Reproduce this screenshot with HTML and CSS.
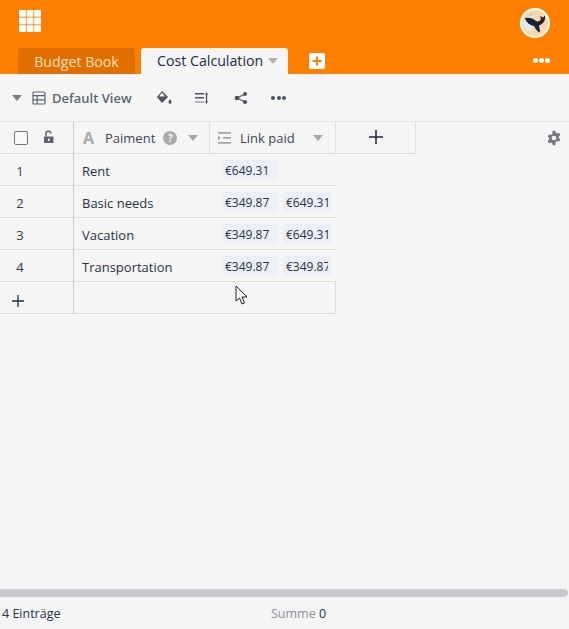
FILE: index.html
```html
<!DOCTYPE html>
<html lang="en">
<head>
  <meta charset="UTF-8" />
  <title>Cost Calculation</title>
  <link rel="stylesheet" href="styles.css">
</head>
<body>
  <div class="app">
    <header class="topbar">
      <div class="topbar-row">
        <svg class="grid-logo" width="22" height="22" viewBox="0 0 22 22">
          <rect x="0" y="0" width="6.800" height="6.800" rx="1"/><rect x="7.600" y="0" width="6.800" height="6.800"/><rect x="15.200" y="0" width="6.800" height="6.800" rx="1"/>
          <rect x="0" y="7.600" width="6.800" height="6.800"/><rect x="7.600" y="7.600" width="6.800" height="6.800"/><rect x="15.200" y="7.600" width="6.800" height="6.800"/>
          <rect x="0" y="15.200" width="6.800" height="6.800" rx="1"/><rect x="7.600" y="15.200" width="6.800" height="6.800"/><rect x="15.200" y="15.200" width="6.800" height="6.800" rx="1"/>
        </svg>
        <div class="avatar">
          <svg width="26" height="26" viewBox="0 0 26 26">
            <circle cx="13" cy="13" r="13" fill="#fbd6ad"/>
            <path d="M1 12c2-3 5-6 9-7l3 9-4 8c-4-2-7-5-8-10z" fill="#e4e8ee"/>
            <path d="M3 8c4-1 8 0 11 3 2 1 4 0 5-2l-1-3 3 1.500 2-2 0 3.500c-.5 3-3 5.500-6 6.500l1 6-1 1-3-3-2-3.500c-4-.5-8-4-9-7.500z" fill="#1a2233"/>
            <circle cx="9" cy="4.500" r="1.500" fill="#c4c8cc"/>
          </svg>
        </div>
      </div>
      <div class="tabs">
        <div class="tab tab-off">Budget Book</div>
        <div class="tab tab-on">Cost Calculation<span class="caret caret-tab"></span></div>
        <div class="tab-add">
          <svg width="16" height="16" viewBox="0 0 16 16"><rect width="16" height="16" rx="2" fill="#fff"/><path d="M8 3.500v9M3.500 8h9" stroke="#ff8000" stroke-width="2"/></svg>
        </div>
        <div class="dots dots-white"><i></i><i></i><i></i></div>
      </div>
    </header>

    <div class="toolbar">
      <span class="caret caret-view"></span>
      <svg class="view-icon" width="14" height="14" viewBox="0 0 14 14" fill="none" stroke="#5d6470" stroke-width="1.200">
        <rect x="1" y="1" width="12" height="12" rx="1"/><path d="M1 4.600h12M1 8.800h12M5.200 4.600V13"/>
      </svg>
      <span class="view-name">Default View</span>
      <svg class="tool-fill" width="16" height="16" viewBox="0 0 16 16" fill="#4c5360">
        <path d="M6 1 1 7l5 6 6-6-1.500-1.500z"/><path d="M6 2.500 3 6.500h6z" fill="#f5f5f5"/>
        <path d="M14 9c1 1.600 1.500 2.400 1.500 3.200a1.500 1.500 0 0 1-3 0c0-.8.5-1.600 1.500-3.200z"/>
      </svg>
      <svg class="tool-sort" width="14" height="14" viewBox="0 0 14 14">
        <path d="M0 2h9v1.600H0zM0 6h9v1.600H0z" fill="#4c5360"/><path d="M0 10h9v2H0z" fill="#b5b5b5"/>
        <path d="M11.500 2v10" stroke="#4c5360" stroke-width="1.300"/><path d="M10 3.500 11.500 1 13 3.500zM10 10.500l1.500 2.500 1.500-2.500z" fill="#4c5360"/>
      </svg>
      <svg class="tool-share" width="14" height="14" viewBox="0 0 14 14">
        <path d="M11 3 3 7l8 4" fill="none" stroke="#4c5360" stroke-width="1.100"/>
        <circle cx="3" cy="7" r="2.300" fill="#4c5360"/><circle cx="11" cy="3" r="2.100" fill="#4c5360"/><circle cx="11" cy="11" r="2.100" fill="#4c5360"/>
      </svg>
      <div class="dots dots-dark"><i></i><i></i><i></i></div>
    </div>

    <div class="table-area">
      <div class="row row-head">
        <div class="cell cell-index head-index">
          <span class="checkbox"></span>
          <svg class="lock" width="12" height="14" viewBox="0 0 12 14" fill="#5d6470">
            <path d="M1 6.500h9.500V13H1z"/><path d="M3 6.500V4a2.500 2.500 0 0 1 5-.5" fill="none" stroke="#5d6470" stroke-width="1.500"/>
            <rect x="5" y="8.500" width="1.500" height="2.500" fill="#f5f5f5"/>
          </svg>
        </div>
        <div class="cell cell-name head-cell">
          <span class="type-a">A</span>
          <span class="head-label">Paiment</span>
          <span class="help">?</span>
          <span class="caret caret-head"></span>
        </div>
        <div class="cell cell-link head-cell head-link">
          <svg class="link-icon" width="13" height="12" viewBox="0 0 13 12">
            <path d="M0 0h13v1.800H0zM5 5h8v1.800H5zM0 10h13v1.800H0z" fill="#a6a6a6"/><path d="M0 3.500 3 5.900 0 8.300z" fill="#a6a6a6"/>
          </svg>
          <span class="head-label">Link paid</span>
          <span class="caret caret-link"></span>
        </div>
        <div class="cell cell-add">
          <svg width="14" height="14" viewBox="0 0 14 14"><path d="M7 0v14M0 7h14" stroke="#1d2430" stroke-width="1.500"/></svg>
        </div>
        <svg class="settings" width="16" height="16" viewBox="0 0 24 24" fill="#74797f">
          <path fill-rule="evenodd" d="M10 1h4l.6 3a8 8 0 0 1 2 1.100l2.900-1 2 3.500-2.300 2a8 8 0 0 1 0 2.400l2.300 2-2 3.500-2.900-1a8 8 0 0 1-2 1.100L14 23h-4l-.6-3a8 8 0 0 1-2-1.100l-2.900 1-2-3.500 2.300-2a8 8 0 0 1 0-2.400l-2.300-2 2-3.500 2.900 1a8 8 0 0 1 2-1.100zM12 8.500a3.500 3.500 0 1 0 0 7 3.500 3.500 0 0 0 0-7z"/>
        </svg>
      </div>
      <div class="row">
        <div class="cell cell-index">1</div>
        <div class="cell cell-name">Rent</div>
        <div class="cell cell-link"><span class="chip">€649.31</span></div>
      </div>
      <div class="row">
        <div class="cell cell-index">2</div>
        <div class="cell cell-name">Basic needs</div>
        <div class="cell cell-link"><span class="chip">€349.87</span><span class="chip chip-cut">€649.31</span></div>
      </div>
      <div class="row">
        <div class="cell cell-index">3</div>
        <div class="cell cell-name">Vacation</div>
        <div class="cell cell-link"><span class="chip">€349.87</span><span class="chip chip-cut">€649.31</span></div>
      </div>
      <div class="row">
        <div class="cell cell-index">4</div>
        <div class="cell cell-name">Transportation</div>
        <div class="cell cell-link"><span class="chip">€349.87</span><span class="chip chip-cut">€349.87</span></div>
      </div>
      <div class="row row-new">
        <div class="cell cell-index">
          <svg width="12" height="12" viewBox="0 0 12 12"><path d="M6 0v12M0 6h12" stroke="#1d2f4f" stroke-width="1.300"/></svg>
        </div>
        <div class="cell cell-new"></div>
      </div>
      <svg class="cursor" width="14" height="20" viewBox="0 0 14 20">
        <path d="M1 1v15l3.500-3 2.500 6 2.500-1-2.500-6H12z" fill="#fff" stroke="#222" stroke-width="1"/>
      </svg>
    </div>

    <div class="scrollbar"></div>
    <footer class="statusbar">
      <span class="entries">4 Einträge</span>
      <span class="sum"><span class="sum-label">Summe</span> 0</span>
    </footer>
  </div>
</body>
</html>
```
FILE: styles.css
```css
* { box-sizing: border-box; }
html, body { margin: 0; height: 100%; overflow: hidden; }
body { font-family: "Open Sans", "Noto Sans", sans-serif; font-size: 13px; color: #2a3244; background: #f5f5f5; }

.app { display: flex; flex-direction: column; height: 629px; }

.topbar { background: #ff8000; height: 74px; flex: none; display: flex; flex-direction: column; }
.topbar-row { height: 48px; padding: 8px 19px 0 19px; display: flex; justify-content: space-between; align-items: flex-start; }
.grid-logo { fill: #fff; margin-top: 2px; }
.avatar { width: 30px; height: 30px; border-radius: 50%; background: #fff; display: flex; align-items: center; justify-content: center; }

.tabs { display: flex; height: 26px; padding-left: 18px; align-items: stretch; }
.tab { font-size: 14.2px; line-height: 28px; border-radius: 3px 3px 0 0; }
.tab-off { width: 117px; background: #e06f00; color: #fde0bf; text-align: center; margin-right: 6px; }
.tab-on { width: 147px; background: #f5f5f5; color: #1f2a3c; padding-left: 16px; display: flex; align-items: center; white-space: nowrap; }
.tab-add { margin: 5px 0 0 21px; height: 16px; }

.caret { display: inline-block; width: 0; height: 0; border-left: 5px solid transparent; border-right: 5px solid transparent; border-top: 6px solid #a6a6a6; }
.caret-tab { margin-left: 5px; border-top-color: #b0b0b0; }
.caret-view { border-top-color: #7a7f87; margin-left: 12px; }
.caret-head { margin-left: 11px; }
.caret-link { margin-left: 18px; }

.dots { display: flex; gap: 2px; }
.dots i { width: 4px; height: 4px; border-radius: 50%; display: block; }
.dots-white { margin-left: auto; margin-right: 19px; align-items: center; height: 26px; margin-top: -1px; gap: 1px; }
.dots-white i { background: #fff; width: 5px; height: 5px; }
.dots-dark i { background: #4c5360; }

.toolbar { height: 48px; flex: none; display: flex; align-items: center; border-bottom: 1px solid #e4e4e4; }
.view-icon { margin-left: 10px; }
.view-name { margin-left: 6px; font-size: 13px; font-weight: 600; color: #5d6470; width: 104px; white-space: nowrap; }
.tool-sort { margin-left: 23px; }
.tool-share { margin-left: 25px; }
.dots-dark { margin-left: 23px; gap: 1.500px; }

.table-area { flex: 1; position: relative; }

.row { display: flex; height: 32px; }
.cell { height: 32px; border-bottom: 1px solid #dbdbdb; display: flex; align-items: center; white-space: nowrap; }
.cell-index { width: 74px; border-right: 1px solid #c8c8c8; justify-content: center; padding: 2px 33px 0 0; color: #333b48; font-size: 13px; }
.cell-name { width: 136px; padding: 2px 0 0 8px; color: #2a3244; font-size: 13px; }
.cell-link { width: 126px; padding-left: 12px; gap: 5px; overflow: hidden; }

.row-head { position: relative; }
.head-index { padding: 0 18px 0 14px; justify-content: space-between; }
.lock { margin-top: -2px; }
.head-cell { border-right: 1px solid #dbe1e4; }
.head-label { color: #3c4556; }
.cell-name.head-cell { padding: 0 0 0 9px; }
.head-link { padding-left: 8px; gap: 0; }
.type-a { font-size: 16px; font-weight: 700; color: #a9a9a9; margin-right: 9px; width: 13px; }
.help { width: 14px; height: 14px; border-radius: 50%; background: #ababab; color: #f5f5f5; font-size: 10px; font-weight: 700; display: flex; align-items: center; justify-content: center; margin-left: 8px; }
.link-icon { margin-right: 9px; flex: none; }
.cell-add { width: 80px; justify-content: center; border-right: 1px solid #dbe1e4; padding-bottom: 2px; }
.settings { position: absolute; right: 7px; top: 8px; }

.checkbox { width: 14px; height: 14px; border: 1px solid #6f7680; border-radius: 2px; background: #fafafa; }

.chip { flex: none; width: 56px; height: 20px; font-size: 12px; color: #2a3244; background: #ecf0f6; border-radius: 3px; padding-left: 3px; line-height: 21px; overflow: hidden; }
.chip-cut { width: 48px; border-right: 3px solid #ecf0f6; }

.row-new .cell-index { padding: 6px 37px 0 0; }
.cell-new { width: 262px; border-right: 1px solid #dbdbdb; }

.cursor { position: absolute; left: 235px; top: 163px; }

.scrollbar { height: 8px; flex: none; background: #c9cacf; border-radius: 0 4px 4px 0; margin-right: 1px; }
.statusbar { height: 32px; flex: none; display: flex; align-items: center; padding-left: 2px; position: relative; color: #2a3244; }
.entries { width: 269px; font-size: 12.500px; }
.sum { font-size: 12.500px; }
.sum-label { color: #8c929c; }
```
